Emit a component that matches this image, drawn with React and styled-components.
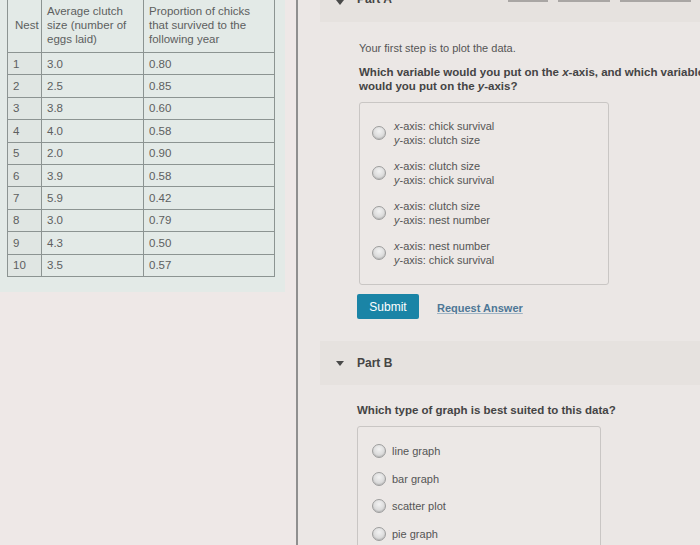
import React from "react";
import styled, { createGlobalStyle } from "styled-components";

const Global = createGlobalStyle`
  html, body { margin: 0; padding: 0; }
  body {
    background: #ebe7e5;
    font-family: "Liberation Sans", Arial, sans-serif;
    color: #545454;
    overflow: hidden;
  }
`;

const Page = styled.div`
  display: flex;
  width: 700px;
  height: 545px;
  overflow: hidden;
`;

const LeftPanel = styled.div`
  width: 296px;
  flex: none;
  background: #eee8e7;
  border-right: 2px solid #8f8f8f;
`;

const TableWrap = styled.div`
  width: 278px;
  padding: 0 0 15px 7px;
  background: #e3eae7;
`;

const Table = styled.table`
  border-collapse: collapse;
  width: 267px;
  font-size: 11.5px;
  color: #5d6060;
  table-layout: fixed;
  margin-top: -1px;
`;

const Cell = styled.td`
  border: 1px solid #8c9492;
  padding: ${(p) => (p.$head ? "4px 5px 6px" : "0 5px")};
  height: ${(p) => (p.$head ? "auto" : "21.4px")};
  line-height: 14px;
  vertical-align: middle;
  background: ${(p) => (p.$num ? "#e0e6e3" : "transparent")};
  text-align: left;
  font-weight: normal;
`;

const RightPanel = styled.div`
  flex: 1;
  display: flex;
  flex-direction: column;
  & > * { flex-shrink: 0; }
`;

const PartBar = styled.div`
  margin-left: 22px;
  height: ${(p) => p.$h}px;
  background: #e6e2df;
  display: flex;
  align-items: ${(p) => (p.$top ? "flex-start" : "center")};
  padding-left: 16px;
  margin-top: ${(p) => p.$mt || 0}px;
`;

const Triangle = styled.span`
  width: 0;
  height: 0;
  border-left: 4px solid transparent;
  border-right: 4px solid transparent;
  border-top: 5px solid #4a4a4a;
  margin-right: 13px;
`;

const PartTitle = styled.span`
  font-size: 12px;
  font-weight: bold;
  color: #454545;
  margin-top: ${(p) => p.$mt || 0}px;
`;

const Tabs = styled.div`
  margin-left: auto;
  display: flex;
  gap: 10px;
  padding-right: 13px;
`;

const TabLine = styled.span`
  width: ${(p) => p.$w}px;
  height: 2px;
  background: #a9a6a4;
`;

const Body = styled.div`
  padding-left: 61px;
  display: flex;
  flex-direction: column;
  & > * { flex-shrink: 0; }
`;

const Intro = styled.p`
  margin: 19px 0 0;
  font-size: 11px;
  line-height: 14px;
  color: #555;
`;

const Question = styled.p`
  margin: ${(p) => p.$m};
  font-size: 11.5px;
  line-height: 14px;
  font-weight: bold;
  color: #444;
  white-space: nowrap;
`;

const OptionBox = styled.div`
  width: ${(p) => p.$w}px;
  box-sizing: border-box;
  border: 1px solid #c9c6c4;
  border-radius: 3px;
  background: #ece8e6;
  display: flex;
  flex-direction: column;
  gap: ${(p) => p.$gap}px;
  padding: ${(p) => p.$pad};
  margin: ${(p) => p.$m};
`;

const Option = styled.label`
  display: flex;
  align-items: center;
  gap: ${(p) => p.$gap || 9}px;
  font-size: 11px;
  line-height: 14px;
  color: #555;
`;

const Radio = styled.span`
  width: 12px;
  height: 12px;
  flex: none;
  border-radius: 50%;
  border: 1px solid #9d9d9d;
  background: radial-gradient(circle at 50% 35%, #f2f2f2 0%, #d6d6d6 70%, #c4c4c4 100%);
  box-shadow: inset 0 -1px 1px rgba(0,0,0,0.12);
`;

const Lines = styled.span`
  display: flex;
  flex-direction: column;
`;

const Buttons = styled.div`
  display: flex;
  align-items: center;
  gap: 18px;
  margin: 9px 0 0 -2px;
`;

const SubmitBtn = styled.button`
  width: 62px;
  height: 25px;
  border: none;
  border-radius: 2px;
  background: #1a84a6;
  color: #fff;
  font-family: inherit;
  font-size: 12px;
  padding: 0;
`;

const LinkText = styled.span`
  font-size: 11px;
  font-weight: bold;
  color: #4e7796;
  text-decoration: underline;
  text-decoration-color: #9fb4c4;
  margin-top: 2px;
`;

const rows = [
  [1, "3.0", "0.80"],
  [2, "2.5", "0.85"],
  [3, "3.8", "0.60"],
  [4, "4.0", "0.58"],
  [5, "2.0", "0.90"],
  [6, "3.9", "0.58"],
  [7, "5.9", "0.42"],
  [8, "3.0", "0.79"],
  [9, "4.3", "0.50"],
  [10, "3.5", "0.57"],
];

const axisOptions = [
  ["chick survival", "clutch size"],
  ["clutch size", "chick survival"],
  ["clutch size", "nest number"],
  ["nest number", "chick survival"],
];

const graphOptions = ["line graph", "bar graph", "scatter plot", "pie graph"];

export default function App() {
  return (
    <>
      <Global />
      <Page>
        <LeftPanel>
          <TableWrap>
            <Table>
              <colgroup>
                <col style={{ width: 34 }} />
                <col style={{ width: 102 }} />
                <col style={{ width: 131 }} />
              </colgroup>
              <thead>
                <tr>
                  <Cell as="th" $head style={{ paddingLeft: 7 }}>Nest</Cell>
                  <Cell as="th" $head>Average clutch size (number of eggs laid)</Cell>
                  <Cell as="th" $head>Proportion of chicks that survived to the following year</Cell>
                </tr>
              </thead>
              <tbody>
                {rows.map(([n, a, b]) => (
                  <tr key={n}>
                    <Cell $num>{n}</Cell>
                    <Cell>{a}</Cell>
                    <Cell>{b}</Cell>
                  </tr>
                ))}
              </tbody>
            </Table>
          </TableWrap>
        </LeftPanel>
        <RightPanel>
          <PartBar $h={22} $top>
            <Triangle />
            <PartTitle $mt={-8}>Part A</PartTitle>
            <Tabs>
              <TabLine $w={40} />
              <TabLine $w={52} />
              <TabLine $w={71} />
            </Tabs>
          </PartBar>
          <Body>
            <Intro>Your first step is to plot the data.</Intro>
            <Question $m="10px 0 0">
              Which variable would you put on the <i>x</i>-axis, and which variable
              <br />
              would you put on the <i>y</i>-axis?
            </Question>
            <OptionBox $gap={12} $w={250} $pad="16px 0 17px 12px" $m="9px 0 0">
              {axisOptions.map(([x, y], i) => (
                <Option key={i} $gap={8}>
                  <Radio />
                  <Lines>
                    <span><i>x</i>-axis: {x}</span>
                    <span><i>y</i>-axis: {y}</span>
                  </Lines>
                </Option>
              ))}
            </OptionBox>
            <Buttons>
              <SubmitBtn>Submit</SubmitBtn>
              <LinkText>Request Answer</LinkText>
            </Buttons>
          </Body>
          <PartBar $h={44} $mt={22}>
            <Triangle />
            <PartTitle>Part B</PartTitle>
          </PartBar>
          <Body>
            <Question $m="18px 0 0 -2px">Which type of graph is best suited to this data?</Question>
            <OptionBox $gap={13.5} $w={244} $pad="17px 0 20px 14px" $m="9px 0 0 -2px">
              {graphOptions.map((g) => (
                <Option key={g} $gap={6}>
                  <Radio />
                  <span>{g}</span>
                </Option>
              ))}
            </OptionBox>
          </Body>
        </RightPanel>
      </Page>
    </>
  );
}
